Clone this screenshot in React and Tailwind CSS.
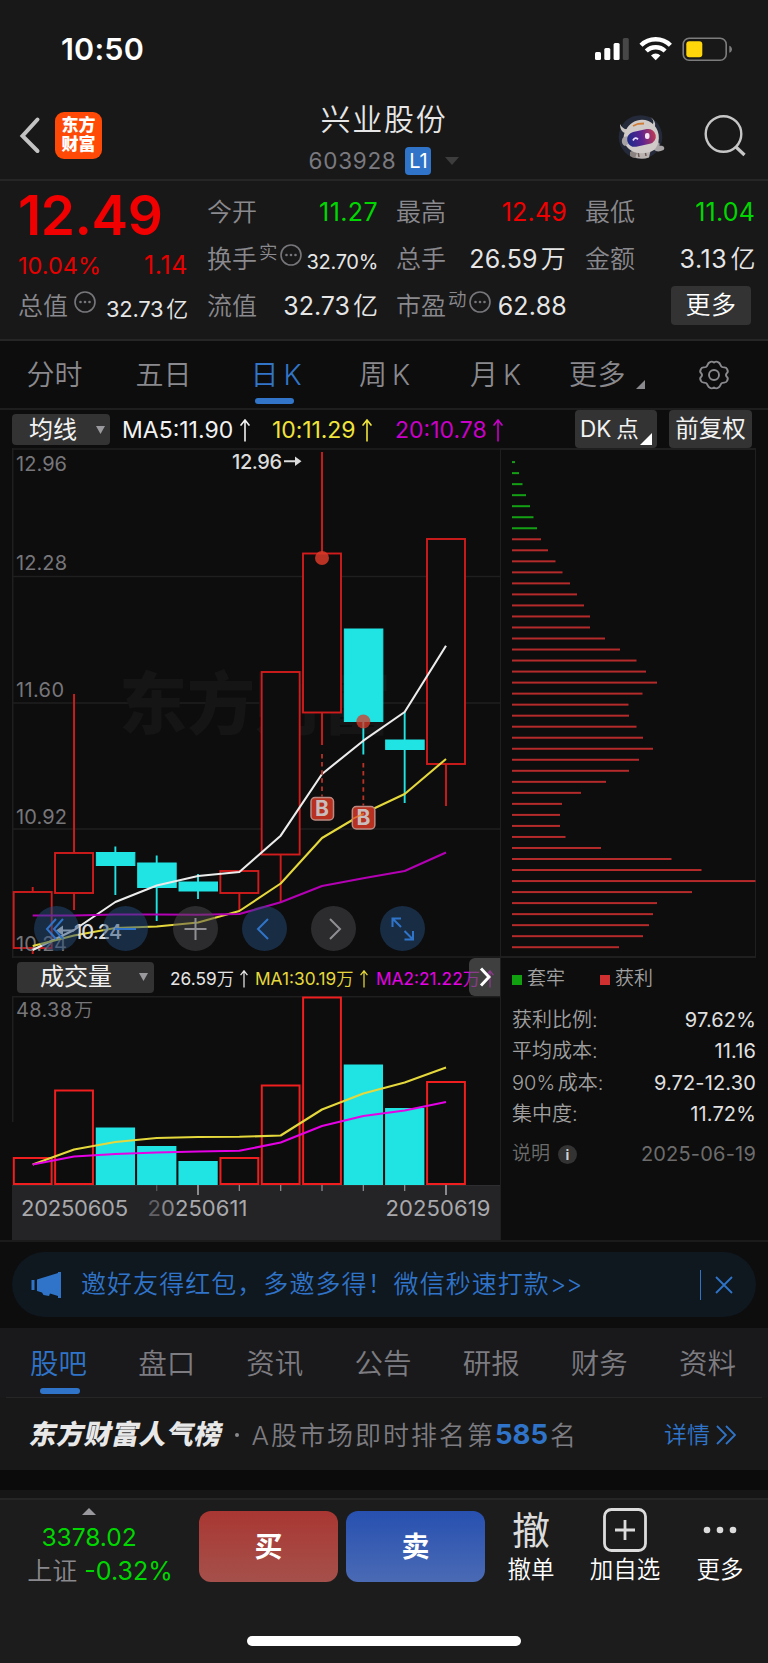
import { clsx } from "clsx";

const STEP = 41.33;
const cx = (i) => 20.7 + i * STEP;

// y values are offsets inside the price chart: body top, body bottom, wick top, wick bottom
const CANDLES = [
  { up: true, top: 444, bottom: 500, high: 439, low: 506 },
  { up: true, top: 405, bottom: 445, high: 246, low: 462 },
  { up: false, top: 404.5, bottom: 417.5, high: 398.5, low: 447 },
  { up: false, top: 415, bottom: 439.5, high: 407.5, low: 473 },
  { up: false, top: 434, bottom: 443, high: 426, low: 451 },
  { up: true, top: 423, bottom: 445, high: 423, low: 462 },
  { up: true, top: 224, bottom: 406.5, high: 224, low: 454 },
  { up: true, top: 105.5, bottom: 264.5, high: 4, low: 297 },
  { up: false, top: 181, bottom: 273.5, high: 181, low: 306.5 },
  { up: false, top: 292, bottom: 301.5, high: 264, low: 355 },
  { up: true, top: 91, bottom: 316, high: 91, low: 358 },
];

const MA5 = [502, 482, 454, 437.5, 428, 424, 387.7, 326, 292.7, 264, 197.7];
const MA10 = [498, 487.5, 480, 478.5, 474.5, 463, 435.5, 390, 365.5, 346, 311];
const MA20 = [467.5, 467.5, 466.5, 466.5, 466.7, 466, 454.3, 438, 430.3, 423, 404.5];

const VOLUMES = [162.5, 95, 132.5, 151, 166, 162.5, 90, 2, 69.5, 113, 86.5];
const VOL_MA1 = [169, 154, 146.5, 142.5, 141.5, 141.3, 140, 114, 98, 87, 72];
const VOL_MA2 = [169, 161, 158.5, 157, 156, 155.3, 147, 130.5, 120.5, 115, 106.5];

const CHIPS = [
  3, 7, 10.5, 14, 18, 21.5, 25, 29, 36, 43.5, 50.5, 58, 65, 72, 78, 78, 93, 108, 124.5, 134, 145,
  130.5, 116.5, 117, 124.5, 131, 141, 127, 117, 94, 69, 50, 48, 48, 53.5, 89, 159.5, 189.5, 243.5,
  180, 145, 141, 137, 131, 107,
];

const points = (values) => values.map((y, i) => `${cx(i)},${y}`).join(" ");

const UpArrow = ({ className }) => (
  <svg viewBox="0 0 10 23" fill="none" stroke="currentColor" strokeWidth="1.6" className={className}>
    <path d="M5 22.5V1.2M0.6 6.6 5 1l4.4 5.6" />
  </svg>
);

const Dots = ({ className }) => (
  <svg viewBox="0 0 22 22" className={clsx("h-[22px] w-[22px] shrink-0 text-[#77767b]", className)}>
    <circle cx="11" cy="11" r="10" fill="none" stroke="currentColor" strokeWidth="1.6" />
    <circle cx="6.5" cy="11" r="1.3" fill="currentColor" />
    <circle cx="11" cy="11" r="1.3" fill="currentColor" />
    <circle cx="15.5" cy="11" r="1.3" fill="currentColor" />
  </svg>
);

const StatusBar = () => (
  <div className="flex h-[96px] items-center justify-between pl-[61px] pr-[35px] pt-[2px]">
    <span className="text-[30.500px] font-semibold tracking-[0.200px] text-white">10:50</span>
    <svg viewBox="0 0 138 26" className="h-[26px] w-[138px]">
      <rect x="0" y="16" width="6" height="8" rx="1.5" fill="#fff" />
      <rect x="9.3" y="12" width="6" height="12" rx="1.5" fill="#fff" />
      <rect x="18.6" y="7" width="6" height="17" rx="1.5" fill="#fff" />
      <rect x="27.8" y="2" width="6" height="22" rx="1.5" fill="#474747" />
      <g fill="none" stroke="#fff">
        <path d="M46 9.3a21 21 0 0 1 29.4 0" strokeWidth="4.4" />
        <path d="M51.3 15a13.5 13.5 0 0 1 18.8 0" strokeWidth="4.4" />
      </g>
      <path d="M60.7 24.3 56 19.4a6.8 6.8 0 0 1 9.4 0z" fill="#fff" />
      <rect x="88.2" y="2.2" width="43" height="22" rx="6" fill="none" stroke="#7c7c7c" strokeWidth="1.6" />
      <rect x="91.3" y="5.2" width="16" height="16" rx="3" fill="#ffd60a" />
      <path d="M134.3 9.7c3.6 1 3.6 6 0 7z" fill="#7c7c7c" />
    </svg>
  </div>
);

const Robot = () => (
  <svg viewBox="0 0 48 48" className="h-[48px] w-[48px]">
    <circle cx="22.5" cy="24" r="21.8" fill="#252a3a" />
    <path d="M15 36h18l-2 8.500q-8 3-17 -1z" fill="#b9b2ae" />
    <path d="m20 38 1 6m6-7 1 6" stroke="#6d5a58" strokeWidth="1.500" />
    <path d="M12 39c2-2 5-1 7 1l-2 5c-2 0-3-1-5-2z" fill="#8a8280" />
    <path d="M38 31c3-3 4-1 3.500 2 4-1 6 2 4 4-4 2-8 2-10-1z" fill="#a9a5a6" />
    <path d="M2 11c0 5 2 8 5 9l4-4c-4 1-7-1-9-5zM32 4c3 2 4 4 3 7l-4 1 3 5c5-3 4-10-2-13z" fill="#c9c4c2" />
    <path d="M8 17C13 6 28 3 36 12c7 7 6 20 0 25-8 5-20 4-25-1C5 31 4 23 8 17z" fill="#d0cbc9" />
    <path d="M6 24c-3 1-3 8 1 9l3-2V23z" fill="#a7a2a4" />
    <rect x="9" y="17.500" width="29" height="15" rx="7.500" transform="rotate(-12 23 25)" fill="url(#visor)" />
    <path d="m15 13 5-2.200 6-.3" stroke="#cf7a35" strokeWidth="1.800" fill="none" />
    <path d="M15 27.500q2-4 5 -1.200" stroke="#e8ddff" strokeWidth="1.800" fill="none" />
    <rect x="27" y="20" width="4.500" height="6" rx="2" fill="#f3e4f6" />
    <defs>
      <linearGradient id="visor">
        <stop offset="0" stopColor="#1b2a8a" />
        <stop offset="0.5" stopColor="#5a2390" />
        <stop offset="1" stopColor="#c03a55" />
      </linearGradient>
    </defs>
  </svg>
);

const Header = () => (
  <div className="grid h-[85px] grid-cols-[1fr_auto_1fr] border-b-2 border-[#262626]">
    <div className="flex items-start pl-[19px] pt-[16px]">
      <svg viewBox="0 0 22 38" className="mt-[4px] h-[38px] w-[22px]">
        <path d="M18.500 3.500 3.500 20l15 15" fill="none" stroke="#c3c3c3" strokeWidth="4" strokeLinecap="round" />
      </svg>
      <div className="ml-[14px] flex h-[47px] w-[47px] flex-col items-center justify-center rounded-[9px] bg-[#fe4a06] pb-px text-[17px] font-black leading-[19px] text-white">
        <span>东方</span>
        <span>财富</span>
      </div>
    </div>
    <div className="flex flex-col items-center">
      <h1 className="mt-[4px] text-[30px] font-[350] leading-[38px] tracking-[1.700px] text-[#e6e6e6]">兴业股份</h1>
      <div className="mt-[9px] flex items-center">
        <span className="text-[22.5px] leading-[28px] tracking-[0.700px] text-[#7a7a80]">603928</span>
        <span className="ml-[9px] flex h-[28px] w-[26px] items-center justify-center rounded-[4px] bg-[#2f74c8] text-[20px] text-white">L1</span>
        <svg viewBox="0 0 14 8" className="ml-[14px] h-[8px] w-[14px]">
          <path d="M0 0h14L7 8z" fill="#3d3d3d" />
        </svg>
      </div>
    </div>
    <div className="flex items-start justify-end pr-[21px] pt-[17px]">
      <Robot />
      <svg viewBox="0 0 44 44" className="ml-[37px] h-[44px] w-[44px]" fill="none" stroke="#c6c6c6" strokeWidth="2.400">
        <circle cx="20.500" cy="21" r="17.800" />
        <path d="m32.500 33.500 9 8.500" strokeWidth="3.200" />
      </svg>
    </div>
  </div>
);

const Cell = ({ label, sup, dots, value, valueClass }) => (
  <div className="flex h-[47px] items-center justify-between">
    <span className="flex items-center whitespace-nowrap font-[350] text-[#8a898e]">
      <span className="text-[25px]">{label}</span>
      {sup && <span className="ml-[2px] mt-[-14px] text-[18.500px]">{sup}</span>}
      {dots && <Dots className={clsx("mt-[-9px]", sup ? "ml-[2px]" : "ml-[6px]")} />}
    </span>
    <span className={clsx("whitespace-nowrap", valueClass)}>{value}</span>
  </div>
);

const Amount = ({ num, unit }) => (
  <>
    {num}
    <span className="ml-[3px] font-[350]">{unit}</span>
  </>
);

const Quote = () => (
  <div className="grid h-[160px] grid-cols-4 gap-x-[19px] border-b-2 border-[#262626] pl-[18px] pr-[13px] pt-[8px]">
    <div>
      <div className="flex h-[53px] items-center text-[55px] font-semibold tracking-[-0.5px] text-[#f00000]">12.49</div>
      <div className="flex h-[41px] items-center justify-between pt-[6px] text-[#e60000]">
        <span className="text-[23.500px]">10.04%</span>
        <span className="text-[25px] tracking-[0.600px]">1.14</span>
      </div>
      <Cell label="总值" dots value={<Amount num="32.73" unit="亿" />} valueClass="pt-[5px] text-[22px] tracking-[-0.3px] text-[#e6e6e6]" />
    </div>
    <div>
      <Cell label="今开" value="11.27" valueClass="-mr-px text-[25px] tracking-[0.400px] text-[#00d700]" />
      <Cell label="换手" sup="实" dots value="32.70%" valueClass="-mr-px pt-[5px] text-[20px] tracking-[-0.300px] text-[#e6e6e6]" />
      <Cell label="流值" value={<Amount num="32.73" unit="亿" />} valueClass="-mr-px text-[25px] text-[#e6e6e6]" />
    </div>
    <div>
      <Cell label="最高" value="12.49" valueClass="-mr-px text-[25px] tracking-[0.200px] text-[#f00000]" />
      <Cell label="总手" value={<Amount num="26.59" unit="万" />} valueClass="text-[25px] tracking-[0.200px] text-[#e6e6e6]" />
      <Cell label="市盈" sup="动" dots value="62.88" valueClass="-mr-px text-[25px] tracking-[0.200px] text-[#e6e6e6]" />
    </div>
    <div>
      <Cell label="最低" value="11.04" valueClass="text-[25px] tracking-[0.200px] text-[#00d700]" />
      <Cell label="金额" value={<Amount num="3.13" unit="亿" />} valueClass="-mr-px text-[25px] tracking-[0.600px] text-[#e6e6e6]" />
      <button className="ml-auto mr-[4px] mt-[3px] flex h-[39px] w-[80px] items-center justify-center rounded-[4px] bg-[#333] text-[25px] font-[350] tracking-[0.500px] text-white">
        更多
      </button>
    </div>
  </div>
);

const PERIODS = [
  { label: "分时", width: "w-[109px]" },
  { label: "五日", width: "w-[109px]" },
  { label: "日 K", width: "w-[116px]", active: true },
  { label: "周 K", width: "w-[101px]" },
  { label: "月 K", width: "w-[121px]" },
];

const PeriodTabs = () => (
  <div className="flex h-[69px] items-center border-b-2 border-[#1e1e1e] text-[28px] font-[350] text-[#8a898e]">
    {PERIODS.map((tab) => (
      <div
        key={tab.label}
        className={clsx(
          "relative flex h-full items-center justify-center [word-spacing:-3px]",
          tab.width,
          tab.active && "text-[#3275c8]"
        )}
      >
        {tab.label}
        {tab.active && <i className="absolute bottom-[4px] left-[37px] h-[6px] w-[39px] rounded-full bg-[#3275c8]" />}
      </div>
    ))}
    <div className="flex items-center pl-[13px]">
      <span className="tracking-[0.500px]">更多</span>
      <svg viewBox="0 0 9 9" className="ml-[10px] mt-[20px] h-[9px] w-[9px]">
        <path d="M9 0v9H0z" fill="#8a898e" />
      </svg>
    </div>
    <svg viewBox="0 0 32 32" className="ml-[53px] h-[32px] w-[32px]" fill="none" stroke="#8a898e" strokeWidth="1.900" strokeLinejoin="round">
      <path d="M11.500 3.500q2.200-1.700 4.500 0q2.300-1.700 4.500 0c2 .5 1.500 3.500 3.500 4.500s4-.5 5 2q1.700 3-.2 4.200-1.600 1.800 0 3.600 1.900 1.200.2 4.200c-1 2.500-3 1-5 2s-1.500 4-3.500 4.500q-2.200 1.700-4.500 0-2.300 1.700-4.500 0c-2-.5-1.500-3.500-3.500-4.500s-4 .5-5-2q-1.700-3 .2-4.200 1.600-1.800 0-3.600Q1.300 13 3 10c1-2.500 3-1 5-2s1.500-4 3.500-4.500z" />
      <circle cx="16" cy="16" r="5" />
    </svg>
  </div>
);

const Caret = ({ className }) => (
  <svg viewBox="0 0 9 8" className={clsx("h-[8px] w-[9px]", className)}>
    <path d="M0 0h9L4.500 8z" fill="#9a999e" />
  </svg>
);

const MaBar = () => (
  <div className="flex h-[38px] items-start text-[23px] text-[#f2f2f2]">
    <button className="ml-[12px] mt-[4px] flex h-[31px] w-[98px] items-center rounded-[4px] bg-[#333] pl-[17px] text-[24px]">
      均线
      <Caret className="ml-[19px]" />
    </button>
    <span className="ml-[12px] flex h-[40px] w-[150px] items-center">
      MA5:11.90
      <UpArrow className="ml-[7px] h-[23px] w-[10px]" />
    </span>
    <span className="flex h-[40px] w-[123px] items-center tracking-[-0.1px] text-[#f0e43c]">
      10:11.29
      <UpArrow className="ml-[7px] h-[23px] w-[10px]" />
    </span>
    <span className="flex h-[40px] items-center text-[#c800c8]">
      20:10.78
      <UpArrow className="ml-[6px] h-[23px] w-[10px]" />
    </span>
    <button className="relative ml-auto flex h-[38px] w-[82px] items-center rounded-[4px] bg-[#333] pl-[5px] text-[22.500px]">
      DK<span className="ml-[5px]">点</span>
      <svg viewBox="0 0 12 12" className="absolute bottom-[3px] right-[5px] h-[12px] w-[12px]">
        <path d="M12 0v12H0z" fill="#fff" />
      </svg>
    </button>
    <button className="ml-[12px] mr-[16px] flex h-[38px] w-[83px] items-center justify-center rounded-[4px] bg-[#333] text-[23.500px]">
      前复权
    </button>
  </div>
);

const RedDot = ({ x, y, opacity }) => <circle cx={x} cy={y} r="7" fill="#d83a28" opacity={opacity} />;

const BuyMark = ({ x, from, y }) => (
  <g>
    <line x1={x} x2={x} y1={from} y2={y - 12} stroke="#b83226" strokeWidth="1.800" strokeDasharray="4.500 3.600" />
    <rect x={x - 11} y={y - 11} width="22.500" height="22.500" rx="4" fill="#b8301f" stroke="#b98a82" strokeWidth="1.500" />
    <text x={x} y={y + 7.500} textAnchor="middle" fontSize="21" fontWeight="700" fill="#c9bcbc">B</text>
  </g>
);

const PriceChart = () => (
  <svg viewBox="0 0 488 510" className="block h-[510px] w-[488px]">
    <g stroke="#1f1f1f" strokeWidth="1.500">
      {[1, 128.5, 255, 381, 509].map((y) => (
        <line key={y} x1="0" x2="488" y1={y} y2={y} />
      ))}
      <line x1="0.700" x2="0.700" y1="0" y2="510" />
    </g>
    <text x="107" y="281" fontSize="68" fontWeight="900" fill="#151515">东方财富</text>
    {CANDLES.map((c, i) => {
      const color = c.up ? "#d01c1c" : "#20e3e3";
      return (
        <g key={i} stroke={color} strokeWidth="1.900">
          <line x1={cx(i)} x2={cx(i)} y1={c.high} y2={c.up ? c.top : c.low} />
          {c.up && <line x1={cx(i)} x2={cx(i)} y1={c.bottom} y2={c.low} />}
          <rect
            x={cx(i) - 19}
            y={c.top}
            width={c.up ? 38 : 38.5}
            height={c.bottom - c.top}
            fill={c.up ? "#0d0d0d" : color}
            strokeWidth={c.up ? 1.9 : 1}
          />
        </g>
      );
    })}
    <g fontSize="20" fill="#77767b">
      <text x="4" y="22.500" textLength="51">12.96</text>
      <text x="4" y="122" textLength="51">12.28</text>
      <text x="4" y="249" textLength="48">11.60</text>
      <text x="4" y="376" textLength="51">10.92</text>
      <text x="4" y="502.500" textLength="51">10.24</text>
    </g>
    <g fill="none" strokeWidth="2.100" strokeLinejoin="round">
      <polyline points={points(MA5)} stroke="#ececec" />
      <polyline points={points(MA10)} stroke="#e5d83c" />
      <polyline points={points(MA20)} stroke="#b400b4" />
    </g>
    <g fill="#dcdcdc" fontSize="20" fontWeight="500">
      <text x="220" y="20.500" textLength="50">12.96</text>
      <path d="M272 12.200h11V8.500l6.500 4.700-6.500 4.700v-3.700h-11z" />
      <text x="62" y="491" textLength="48">10.24</text>
      <path d="M62 481.500H51v-4l-7 5 7 5v-4h11z" />
    </g>
    <RedDot x={cx(7)} y={110} opacity={0.85} />
    <RedDot x={cx(8)} y={273.5} opacity={0.75} />
    <BuyMark x={cx(7)} from={306} y={360.5} />
    <BuyMark x={cx(8)} from={315} y={369.5} />
    {/* MA10 stays faintly visible over the second mark */}
    <path d="M351.300 366 363 360.500" transform="translate(-11 5)" stroke="#f08030" strokeWidth="1.500" opacity="0.800" />
  </svg>
);

const TOOLS = [
  { name: "fastBack", d: "M22 13 13 23l9 10M29 13l-9 10 9 10", blue: true },
  { name: "zoomOut", d: "M12 23h21", blue: true },
  { name: "zoomIn", d: "M11.500 23h22M22.500 12v22" },
  { name: "prev", d: "M26 13 16 23l10 10", blue: true },
  { name: "next", d: "M19 13l10 10-10 10" },
  { name: "expand", d: "M12.500 21v-8.500h8.500M13 13l8 8M33 25v8.500h-8.500M32.500 33l-8-8", blue: true },
];

const ChartTools = () => (
  <div className="absolute bottom-[7px] left-[22px] flex gap-[24.300px]">
    {TOOLS.map((tool) => (
      <button
        key={tool.name}
        className={clsx(
          "flex h-[45px] w-[45px] items-center justify-center rounded-full",
          tool.blue ? "bg-[#234b7b]/50 text-[#2f74c8]" : "bg-[#4b4b50]/50 text-[#8f8f94]"
        )}
      >
        <svg viewBox="0 0 45 45" className="h-[45px] w-[45px]" fill="none" stroke="currentColor" strokeWidth="2">
          <path d={tool.d} />
        </svg>
      </button>
    ))}
  </div>
);

const VolumeBar = () => (
  <div className="relative flex h-[38px] items-center overflow-hidden text-[17.300px] text-[#e6e6e6]">
    <button className="ml-[5px] flex h-[31px] w-[137px] shrink-0 items-center rounded-[4px] bg-[#333] pl-[23px] text-[24px] text-[#f2f2f2]">
      成交量
      <Caret className="ml-[27px]" />
    </button>
    <span className="ml-[16px] flex w-[85px] shrink-0 items-center whitespace-nowrap pt-[3px]">
      26.59<span className="font-[350]">万</span>
      <UpArrow className="ml-[6px] h-[18px] w-[8px]" />
    </span>
    <span className="flex w-[121px] shrink-0 items-center whitespace-nowrap pt-[3px] text-[#e5d83c]">
      MA1:30.19<span className="font-[350]">万</span>
      <UpArrow className="ml-[6px] h-[18px] w-[8px]" />
    </span>
    <span className="flex shrink-0 items-center whitespace-nowrap pt-[3px] text-[#e600e6]">
      MA2:21.22<span className="font-[350]">万</span>
      <UpArrow className="ml-[6px] h-[18px] w-[8px]" />
    </span>
    <button className="absolute right-0 top-0 flex h-[38px] w-[31px] items-center justify-center rounded-l-[6px] bg-[#5a5a5a]/65">
      <svg viewBox="0 0 12 20" className="h-[20px] w-[12px]" fill="none" stroke="#fff" strokeWidth="3">
        <path d="m2 1.500 8 8.500-8 8.500" />
      </svg>
    </button>
  </div>
);

const VolumeChart = () => (
  <svg viewBox="0 0 488 244" className="block h-[244px] w-[488px]">
    <line x1="0" x2="488" y1="0.700" y2="0.700" stroke="#1f1f1f" strokeWidth="1.500" />
    <line x1="0.700" x2="0.700" y1="0" y2="126" stroke="#1f1f1f" strokeWidth="1.500" />
    <text x="4" y="21" fontSize="20" fill="#77767b" textLength="56">48.38</text>
    <text x="62" y="21" fontSize="19" fontWeight="350" fill="#77767b">万</text>
    {VOLUMES.map((top, i) => {
      const up = CANDLES[i].up;
      return (
        <rect
          key={i}
          x={cx(i) - (up ? 18.9 : 19.6)}
          y={up ? top - 0.5 : top - 1}
          width={up ? 37.8 : 39.3}
          height={(up ? 188.5 : 190) - top}
          fill={up ? "none" : "#20e3e3"}
          stroke={up ? "#f01e1e" : "none"}
          strokeWidth="2"
        />
      );
    })}
    <g fill="none" strokeWidth="2.100" strokeLinejoin="round" transform="translate(0 -0.500)">
      <polyline points={points(VOL_MA1)} stroke="#e5d83c" />
      <polyline points={points(VOL_MA2)} stroke="#e600e6" />
    </g>
    <rect x="0" y="189" width="488" height="55" fill="#242426" />
    <line x1="0" x2="488" y1="189.500" y2="189.500" stroke="#2e2e30" />
    {[3, 4, 5, 6, 7, 8, 9, 10].map((i) => {
      const major = i === 4 || i === 10;
      return (
        <line
          key={i}
          x1={cx(i)}
          x2={cx(i)}
          y1="189"
          y2={major ? 199 : 195}
          stroke={i === 3 ? "#55555a" : "#8a898e"}
          strokeWidth={major ? 2 : 1.3}
        />
      );
    })}
    <g fontSize="22" fill="#a9a9ad">
      <text x="9" y="220" textLength="107">20250605</text>
      <text x="135.500" y="220" textLength="100">
        <tspan fill="#616165">2</tspan>
        <tspan fill="#8a8a8e">0</tspan>
        <tspan>250611</tspan>
      </text>
      <text x="373.500" y="220" textLength="105">20250619</text>
    </g>
  </svg>
);

const STATS = [
  ["获利比例:", "97.62%"],
  ["平均成本:", "11.16"],
  ["90% 成本:", "9.72-12.30"],
  ["集中度:", "11.72%"],
];

const ChipPanel = () => (
  <div className="w-[256px] border-l border-[#1f1f1f]">
    <div className="h-[510px] border-b-2 border-r border-t-2 border-[#1f1f1f]">
      <svg viewBox="0 0 255 506" className="block h-[506px] w-[255px]">
        {CHIPS.map((w, i) => (
          <rect key={i} x="11" y={11.1 + i * 11.025} width={w} height="2" fill={i < 7 ? "#14a014" : "#b52a2a"} />
        ))}
      </svg>
    </div>
    <div className="flex h-[38px] items-center pl-[11px] pt-[5px] text-[19px] font-[350] text-[#a0a0a0]">
      <i className="mr-[5px] h-[10px] w-[10px] bg-[#10a010]" />
      套牢
      <i className="ml-[35px] mr-[5px] h-[10px] w-[10px] bg-[#d03030]" />
      获利
    </div>
    <div className="pl-[11px] pt-[8px]">
      {STATS.map(([label, value]) => (
        <div key={label} className="flex h-[31.500px] items-center justify-between text-[20px]">
          <span className="font-[350] text-[#a0a0a0] [word-spacing:-3px]">{label}</span>
          <span className="tracking-[0.150px] text-[#e0e0e0]">{value}</span>
        </div>
      ))}
      <div className="mt-[9px] flex h-[30px] items-center text-[19px] text-[#6c6c6c]">
        <span className="font-[350]">说明</span>
        <span className="ml-[8px] flex h-[19px] w-[19px] items-center justify-center rounded-full bg-[#333] text-[14px] font-bold text-[#d0d0d0]">
          i
        </span>
        <span className="ml-auto text-[20px] tracking-[0.200px]">2025-06-19</span>
      </div>
    </div>
  </div>
);

const Banner = () => (
  <div className="h-[88px] border-t-2 border-[#1b1b1b] px-[12px] pt-[10px]">
    <div className="flex h-[65px] items-center rounded-full bg-[#0f171f] pl-[19px] pr-[23px] text-[#2f74c8]">
      <svg viewBox="0 0 31 26" className="h-[26px] w-[31px]" fill="currentColor">
        <rect x="0.500" y="8" width="3" height="10" />
        <path d="M6 7.500 27 1V0h3v26h-3v-2l-8-2.500-1 2.500-5.500-1-1.500-2.500L6 19z" />
      </svg>
      <span className="ml-[19px] text-[25px] font-[350] tracking-[1.050px]">
        邀好友得红包，多邀多得！微信秒速打款<span className="tracking-[-0.200px]">&gt;&gt;</span>
      </span>
      <i className="ml-auto h-[30px] w-px bg-[#2f74c8]" />
      <svg viewBox="0 0 18 18" className="ml-[14px] h-[18px] w-[18px]" stroke="currentColor" strokeWidth="1.800">
        <path d="m1 1 16 16M17 1 1 17" />
      </svg>
    </div>
  </div>
);

const NEWS_TABS = ["股吧", "盘口", "资讯", "公告", "研报", "财务", "资料"];

const NewsTabs = () => (
  <div className="bg-[#19191b] px-[6px]">
    <div className="flex h-[70px] items-center justify-between border-b border-[#262626] pl-[24px] pr-[26px] pt-[4px] text-[28.500px] font-[350] text-[#7d7c81]">
      {NEWS_TABS.map((name, i) => (
        <span key={name} className={clsx("relative", i === 0 && "text-[#2f74c8]")}>
          {name}
          {i === 0 && <i className="absolute -bottom-[8px] left-[10px] h-[6px] w-[40px] rounded-full bg-[#2f74c8]" />}
        </span>
      ))}
    </div>
  </div>
);

const RankRow = () => (
  <div className="flex h-[72px] items-center pl-[30px] pr-[32px] pt-[2px] text-[26px] font-[350] text-[#7d7c81]">
    <span className="-skew-x-12 text-[27px] font-black tracking-[0.500px] text-[#e8e8e8]">东方财富人气榜</span>
    <i className="ml-[12px] h-[4px] w-[4px] rounded-full bg-[#8a898e]" />
    <span className="ml-[13px] tracking-[2px]">A股市场即时排名第</span>
    <span className="text-[27.500px] font-bold text-[#2f74c8]">585</span>
    <span className="ml-[2px]">名</span>
    <span className="ml-auto text-[23px] text-[#2f74c8]">详情</span>
    <svg viewBox="0 0 20 20" className="ml-[6px] h-[20px] w-[20px]" fill="none" stroke="#2f74c8" strokeWidth="1.800">
      <path d="m1 1 9 9-9 9M10 1l9 9-9 9" />
    </svg>
  </div>
);

const BottomBar = () => (
  <div className="flex h-[165px] flex-col items-center justify-between border-t-2 border-[#262626] bg-[#1c1c1c] pb-[17px]">
    <div className="flex w-full items-start">
      <div className="flex w-[177px] flex-col items-center pl-[23px] pt-[8px] text-[25px] text-[#00d700]">
        <svg viewBox="0 0 14 7" className="-ml-[22px] h-[7px] w-[14px]">
          <path d="M7 0l7 7H0z" fill="#9a999e" />
        </svg>
        <span className="-ml-[22px] mt-[5px] text-[24.500px] leading-[34px]">3378.02</span>
        <span className="whitespace-nowrap leading-[35px]">
          <span className="mr-[7px] font-[350] text-[#8a898e]">上证</span>-0.32%
        </span>
      </div>
      <button className="ml-[22px] mt-[11px] h-[71px] w-[139px] rounded-[12px] bg-linear-to-b from-[#a93632] to-[#a5504b] text-[28px] font-bold text-white">
        买
      </button>
      <button className="ml-[8px] mt-[11px] h-[71px] w-[139px] rounded-[12px] bg-linear-to-b from-[#2750b0] to-[#4a6ab4] text-[28px] font-bold text-white">
        卖
      </button>
      <div className="ml-[22px] flex w-[48px] flex-col items-center pt-[8px] text-white">
        <span className="flex h-[44px] items-center text-[38px] text-[#dcdcdc]">撤</span>
        <span className="mt-[1px] whitespace-nowrap text-[23.500px] font-[350] leading-[34px]">撤单</span>
      </div>
      <div className="ml-[33px] flex w-[74px] flex-col items-center pt-[8px] text-white">
        <svg viewBox="0 0 44 44" className="h-[44px] w-[44px]" fill="none" stroke="#dcdcdc" strokeWidth="2.800">
          <rect x="1.500" y="1.500" width="41" height="41" rx="7" />
          <path d="M22 12v20M12 22h20" />
        </svg>
        <span className="mt-[1px] whitespace-nowrap text-[23.500px] font-[350] leading-[34px]">加自选</span>
      </div>
      <div className="ml-[34px] flex w-[48px] flex-col items-center pt-[8px] text-white">
        <svg viewBox="0 0 34 44" className="h-[44px] w-[34px]" fill="#dcdcdc">
          <circle cx="4" cy="22" r="3.300" />
          <circle cx="17" cy="22" r="3.300" />
          <circle cx="30" cy="22" r="3.300" />
        </svg>
        <span className="mt-[1px] whitespace-nowrap text-[23.500px] font-[350] leading-[34px]">更多</span>
      </div>
    </div>
    <div className="h-[10px] w-[274px] rounded-full bg-white" />
  </div>
);

export default function App() {
  return (
    <div
      lang="zh-CN"
      className="h-[1663px] w-[768px] overflow-hidden bg-[#0d0d0d] font-['Inter','Noto_Sans_CJK_SC',sans-serif]"
    >
      <div className="bg-[#181818]">
        <StatusBar />
        <Header />
        <Quote />
      </div>
      <PeriodTabs />
      <MaBar />
      <div className="flex h-[792px] pl-[12px]">
        <div className="w-[488px]">
          <div className="relative">
            <PriceChart />
            <ChartTools />
          </div>
          <VolumeBar />
          <VolumeChart />
        </div>
        <ChipPanel />
      </div>
      <Banner />
      <div className="bg-[#181818]">
        <NewsTabs />
        <RankRow />
      </div>
      <div className="h-[20px] bg-[#0b0b0b]" />
      <div className="h-[8px] bg-[#161616]" />
      <BottomBar />
    </div>
  );
}
